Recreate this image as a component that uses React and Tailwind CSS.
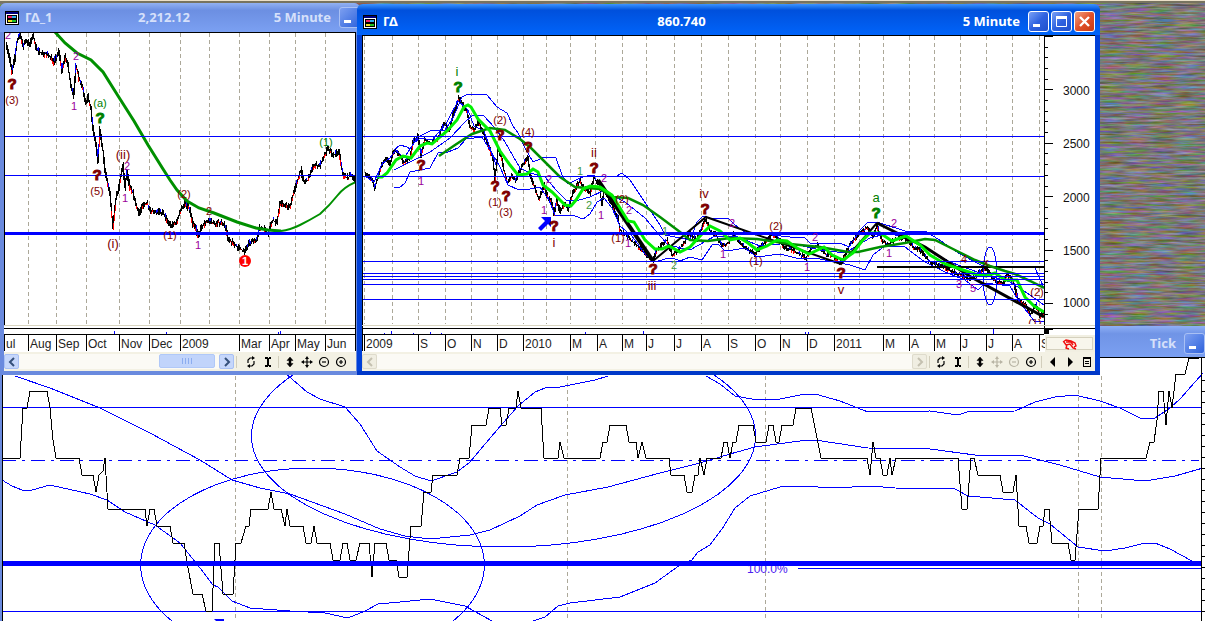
import React from "react";
import clsx from "clsx";

const BLUE = "#0000ff";
const MAROON = "#800000";
const PURPLE = "#990099";
const GREEN = "#008000";
const TEAL = "#3f9a3f";

const weeklyPrice = [
  [6, 42], [9, 55], [12, 72], [15, 58], [17, 42], [20, 33], [23, 47], [26, 40], [30, 45], [33, 35], [37, 50], [42, 53],
  [48, 55], [51, 57], [54, 62], [59, 52], [62, 70], [65, 57], [68, 65], [71, 85], [74, 95], [76, 65], [79, 78], [83, 88],
  [86, 104], [88, 97], [91, 110], [93, 128], [96, 145], [98, 161], [100, 130], [103, 150], [105, 170], [108, 185],
  [110, 195], [113, 229], [116, 198], [119, 188], [123, 165], [125, 188], [127, 172], [130, 188], [133, 192], [136, 205],
  [139, 213], [144, 205], [147, 203], [151, 210], [156, 211], [163, 213], [168, 222], [172, 226], [177, 222], [180, 212],
  [185, 203], [190, 210], [193, 225], [196, 228], [198, 236], [201, 229], [206, 222], [210, 220], [214, 224], [222, 222],
  [226, 227], [228, 240], [233, 243], [240, 249], [245, 252], [249, 243], [256, 240], [260, 228], [264, 228], [268, 233],
  [273, 220], [277, 224], [280, 203], [284, 205], [290, 207], [294, 192], [298, 180], [301, 170], [304, 182], [308, 180],
  [314, 165], [320, 165], [325, 155], [328, 149], [333, 155], [339, 152], [343, 175], [348, 178], [351, 175], [355, 178],
];

const weeklyAverage =
  "M55 32L65 43L77 53L91 60L103 72L120 99L134 121L148 145L163 169L170 180L177 190L187 201L199 208L214 213L237 222L256 228L268 230L281 231";
const weeklyAverageEnd = "M281 231Q290 230 300 225T320 214Q330 205 337 196T356 182";

const dailyPrice = [
  [365, 172], [372, 180], [375, 188], [377, 180], [382, 165], [386, 158], [390, 165], [394, 150], [400, 155], [404, 163],
  [410, 158], [413, 142], [418, 136], [421, 155], [425, 140], [431, 143], [438, 138], [444, 122], [449, 132], [453, 115],
  [459, 98], [463, 104], [467, 112], [470, 128], [474, 130], [478, 122], [483, 132], [488, 145], [493, 158], [495, 182],
  [498, 148], [501, 155], [504, 170], [507, 182], [512, 175], [516, 180], [520, 170], [528, 157], [530, 175], [535, 188],
  [539, 200], [544, 185], [548, 198], [551, 200], [554, 214], [557, 200], [560, 212], [565, 203], [568, 209], [573, 193],
  [580, 180], [583, 186], [590, 194], [594, 178], [599, 184], [602, 205], [604, 190], [610, 200], [618, 218], [620, 230],
  [626, 235], [633, 242], [640, 248], [653, 261], [657, 250], [662, 245], [667, 240], [672, 255], [676, 252], [683, 245],
  [690, 234], [697, 240], [703, 225], [706, 219], [710, 230], [716, 235], [722, 245], [728, 244], [733, 234], [741, 244],
  [750, 251], [755, 254], [762, 245], [772, 235], [778, 238], [784, 248], [792, 250], [800, 254], [806, 258], [812, 248],
  [818, 245], [826, 254], [833, 256], [840, 263], [845, 255], [850, 244], [858, 235], [863, 230], [868, 228], [873, 238],
  [877, 226], [882, 240], [888, 245], [894, 240], [902, 238], [908, 240], [914, 248], [920, 250], [930, 262], [940, 266],
  [950, 270], [960, 275], [970, 280], [980, 272], [986, 268], [994, 280], [1003, 283], [1007, 275], [1013, 280],
  [1018, 300], [1026, 305], [1030, 315], [1036, 305], [1040, 316], [1044, 314],
];

const fastAverage =
  "377,177 382,177 387,173 396,160 403,156 411,158 420,146 427,143 432,144 447,131 457,120 464,107 468,105 471,107 478,119 490,131 500,151 510,165 518,175 527,174 533,169 538,172 543,185 552,192 560,200 565,205 571,206 576,200 583,189 590,186 600,187 612,195 620,208 628,221 634,222 645,240 655,249 662,249 669,246 680,252 690,247 702,234 710,226 720,231 730,240 740,238 748,243 757,250 767,246 777,240 787,241 797,248 809,254 824,247 832,255 843,260 853,253 862,241 870,233 880,233 892,241 906,236 920,245 930,255 945,264 960,269 975,274 986,276 995,273 1005,280 1017,280 1025,297 1034,306 1044,312";
const slowAverage =
  "439,156 455,145 472,134 490,128 505,130 520,139 531,148 545,162 560,177 575,187 600,189 613,197 628,198 643,205 660,217 680,232 690,240 708,241 730,238 757,239 790,244 820,247 848,252 858,252 880,247 905,243 925,239 935,240 955,250 975,260 990,266 1005,271 1015,274 1030,281 1044,288";

const bands = [
  "394,150 400,145 407,147 410,149 418,137 430,131 445,130 453,118 462,97 468,94 487,95 497,107 507,113 513,126 518,133 525,148 533,162 545,157 556,158 562,175 568,184 580,178 590,175 600,177 617,176 622,173 630,180 642,198 652,213 660,225 665,235 690,240 697,222 703,216 710,218 728,218 735,225 745,232 790,237 805,238 810,243 840,243 849,247 860,230 867,223 877,222 905,231 925,231 938,239 960,254 985,267 1035,268 1044,288",
  "394,170 410,162 430,152 450,138 465,122 472,116 483,115 495,128 505,142 513,156 520,168 530,173 545,177 556,190 567,201 579,200 590,197 605,190 612,195 625,202 645,218 655,230 668,245 690,250 715,236 735,236 760,246 790,243 820,250 845,253 870,238 885,234 905,236 925,247 950,262 980,273 1010,282 1030,295 1044,305",
  "394,187 399,188 405,183 410,172 420,170 430,168 438,153 448,152 458,148 466,139 482,137 493,155 500,167 508,185 519,190 530,189 540,187 549,200 555,215 575,216 583,219 590,214 597,202 604,198 612,208 620,226 632,236 645,254 655,262 665,259 673,258 680,261 690,257 702,260 712,245 718,244 724,250 733,250 745,248 757,257 780,254 800,259 815,258 850,265 865,270 873,255 885,246 905,247 925,262 945,272 965,280 978,290 985,283 1010,286 1018,300 1035,322 1044,321",
  "365,176 374,182 382,164 390,158 396,150 404,158 414,143 420,138 432,140 446,124 458,101 468,110 474,126 484,131 496,165",
];

const tickPrice =
  "2,458 20,458 23,408 27,408 30,391 47,391 50,408 53,440 56,458 79,458 82,475 93,475 96,492 99,475 103,471 105,458 108,509 145,509 147,526 150,509 154,509 157,526 170,526 173,543 184,543 188,568 193,594 202,594 206,611 212,611 215,543 219,543 223,594 233,594 236,543 241,543 246,526 249,526 251,509 268,509 271,492 274,509 281,509 285,526 287,509 290,526 303,526 306,543 311,543 314,526 317,543 330,543 333,560 340,560 343,543 347,543 350,560 356,560 360,543 369,543 372,577 375,543 386,543 389,560 396,560 399,577 407,577 411,526 421,526 424,492 431,492 433,475 457,475 460,458 469,458 472,425 486,425 489,408 500,408 502,425 506,425 509,408 516,408 518,391 521,408 541,408 544,458 558,458 560,442 564,458 600,458 603,442 607,442 610,425 626,425 629,442 636,442 638,458 642,442 646,458 669,458 671,475 684,475 687,492 692,492 695,475 698,475 700,458 704,475 707,458 721,458 724,442 727,442 730,458 733,442 736,442 739,425 753,425 756,442 766,442 769,425 773,425 776,442 779,442 782,425 793,425 796,408 811,408 821,458 867,458 870,475 873,442 876,458 880,458 883,475 887,475 890,458 892,475 896,458 958,458 962,509 967,509 971,458 974,458 978,475 1000,475 1003,492 1013,492 1016,475 1019,526 1026,526 1029,543 1037,543 1040,526 1043,526 1045,509 1049,509 1052,543 1068,543 1071,560 1075,560 1079,509 1098,509 1101,458 1146,458 1150,442 1154,442 1157,420 1159,391 1163,391 1166,425 1169,391 1172,408 1176,374 1185,374 1189,358 1199,358";

const tickCurves = [
  "15,376 50,388 100,408 150,433 200,460 232,480 260,488 290,494 345,514 380,529 405,536 430,539 470,535 490,530 520,516 537,505 565,495 608,487 660,473 700,463 730,454 755,447 800,441 815,440 868,448 930,449 975,455 1020,455 1060,465 1100,477 1145,481 1175,476 1203,468",
  "2,480 12,486 22,490 32,490 50,485 90,494 107,500 125,512 155,525 180,543 200,568 213,585 218,587 232,601 250,608 290,611 325,613 348,618 365,611 378,604 400,602 430,599 465,606 492,621",
  "533,621 545,617 558,606 570,603 620,597 655,583 680,565 692,560 698,552 710,545 722,529 735,508 750,496 780,487 800,486 835,488 870,486 895,488 955,489 968,496 1015,500 1038,518 1050,524 1078,547 1105,551 1125,548 1145,543 1155,543 1170,549 1192,561",
  "285,373 307,392 320,399 345,407 360,424 377,451 400,467 415,476 431,481 457,472 470,462 480,450 497,430 518,406 535,392 545,388 560,387 595,380 608,376",
  "706,376 720,384 735,396 752,399 780,399 800,395 815,394 840,401 868,412 930,411 958,415 967,412 1015,411 1035,402 1055,397 1075,395 1100,401 1120,408 1140,418 1155,418 1170,408 1180,399 1203,373",
];

// x, baseline, text, colour, size
const weeklyLabels = [
  [8, 39, "2", PURPLE, 11],
  [12, 104, "(3)", MAROON, 11],
  [76, 60, "2", PURPLE, 11],
  [74, 110, "1", PURPLE, 11],
  [100, 107, "(a)", GREEN, 11],
  [97, 195, "(5)", MAROON, 11],
  [123, 159, "(ii)", MAROON, 13],
  [127, 170, "2", PURPLE, 11],
  [125, 202, "1", PURPLE, 11],
  [113, 248, "(i)", MAROON, 13],
  [184, 198, "(2)", MAROON, 11],
  [209, 215, "2", MAROON, 11],
  [170, 239, "(1)", MAROON, 11],
  [198, 249, "1", PURPLE, 11],
  [326, 146, "(1)", GREEN, 11],
];
const weeklyMarks = [
  [12, 89, MAROON],
  [100, 123, GREEN],
  [97, 180, MAROON],
];

const dailyLabels = [
  [457, 76, "i", GREEN, 13],
  [421, 185, "1", PURPLE, 11],
  [500, 124, "(2)", MAROON, 11],
  [528, 136, "(4)", MAROON, 11],
  [495, 206, "(1)", MAROON, 11],
  [506, 216, "(3)", MAROON, 11],
  [549, 183, "2", PURPLE, 11],
  [544, 214, "1", PURPLE, 11],
  [554, 247, "i", MAROON, 13],
  [580, 175, "1", TEAL, 11],
  [594, 157, "ii", MAROON, 13],
  [604, 182, "2", PURPLE, 11],
  [589, 209, "2", TEAL, 11],
  [601, 219, "1", PURPLE, 11],
  [622, 203, "(2)", MAROON, 11],
  [629, 214, "2", PURPLE, 11],
  [618, 242, "(1)", MAROON, 11],
  [628, 247, "1", PURPLE, 11],
  [652, 290, "iii", MAROON, 13],
  [665, 235, "1", TEAL, 11],
  [674, 269, "2", TEAL, 11],
  [704, 198, "iv", MAROON, 13],
  [723, 258, "1", PURPLE, 11],
  [732, 227, "2", PURPLE, 11],
  [756, 265, "(1)", MAROON, 11],
  [776, 230, "(2)", MAROON, 11],
  [807, 271, "1", PURPLE, 11],
  [815, 241, "2", PURPLE, 11],
  [841, 294, "v", MAROON, 13],
  [876, 202, "a", GREEN, 13],
  [894, 227, "2", PURPLE, 11],
  [889, 257, "1", PURPLE, 11],
  [959, 288, "3", PURPLE, 11],
  [964, 263, "4", MAROON, 11],
  [973, 292, "5", PURPLE, 11],
  [986, 266, "x", MAROON, 11],
  [1037, 296, "(2)", MAROON, 11],
  [1035, 327, "(1)", MAROON, 11],
];
const dailyMarks = [
  [458, 92, GREEN],
  [421, 170, MAROON],
  [500, 140, MAROON],
  [528, 152, MAROON],
  [495, 191, MAROON],
  [506, 201, MAROON],
  [554, 231, MAROON],
  [594, 173, MAROON],
  [653, 274, MAROON],
  [705, 214, MAROON],
  [841, 278, MAROON],
  [876, 218, GREEN],
];

const weeklyMonths = [
  [4, "ul"], [28, "Aug"], [56, "Sep"], [86, "Oct"], [119, "Nov"], [149, "Dec"], [180, "2009"], [239, "Mar"],
  [269, "Apr"], [295, "May"], [325, "Jun"],
];
const dailyMonths = [
  [364, "2009"], [418, "S"], [445, "O"], [471, "N"], [497, "D"], [523, "2010"], [570, "M"], [597, "A"], [622, "M"],
  [646, "J"], [674, "J"], [701, "A"], [728, "S"], [755, "O"], [780, "N"], [807, "D"], [834, "2011"], [883, "M"],
  [909, "A"], [934, "M"], [960, "J"], [986, "J"], [1012, "A"], [1039, "S"],
];
const dailyGrid = [
  364, 392, 418, 445, 471, 497, 523, 546, 570, 595, 622, 646, 674, 701, 728, 755, 780, 807, 834, 859, 883, 909, 934,
  960, 986, 1012, 1039,
];

// fills the space between two closes with a bar for every pixel
const makeBars = (points, spread) => {
  const bars = { black: "", red: "", blue: "" };
  let seed = 7;
  const random = () => {
    seed = (seed * 16807) % 2147483647;
    return seed / 2147483647;
  };
  let last = points[0][1];
  for (let i = 1; i < points.length; i++) {
    const [x0, y0] = points[i - 1];
    const [x1, y1] = points[i];
    for (let x = x0; x < x1; x++) {
      const y = y0 + ((y1 - y0) * (x + 1 - x0)) / (x1 - x0);
      const top = Math.round(Math.min(last, y) - random() * spread);
      const bottom = Math.round(Math.max(last, y) + random() * spread);
      const bar = `M${x + 0.5} ${top}V${bottom}`;
      bars.black += bar;
      const pick = random();
      const middle = Math.round((top + bottom) / 2);
      if (pick < 0.22) bars.red += `M${x + 0.5} ${middle}V${bottom}`;
      else if (pick > 0.82) bars.blue += `M${x + 0.5} ${top}V${middle}`;
      last = y;
    }
  }
  return bars;
};

const PriceBars = ({ points, spread }) => {
  const bars = makeBars(points, spread);
  return (
    <g fill="none" shapeRendering="crispEdges">
      <path d={bars.black} stroke="#000" />
      <path d={bars.red} stroke="#f00" />
      <path d={bars.blue} stroke={BLUE} />
    </g>
  );
};

const VerticalGrid = ({ lines, top, bottom }) => (
  <g stroke="#aca899" strokeDasharray="4 3" shapeRendering="crispEdges">
    {lines.map((x) => (
      <line key={x} x1={x + 0.5} x2={x + 0.5} y1={top} y2={bottom} />
    ))}
  </g>
);

const HorizontalLines = ({ lines, from, to }) => (
  <g stroke={BLUE} shapeRendering="crispEdges">
    {lines.map((y) => (
      <line key={y} x1={from} x2={to} y1={y + 0.5} y2={y + 0.5} />
    ))}
  </g>
);

const WaveLabels = ({ labels, marks }) => (
  <g textAnchor="middle">
    {labels.map(([x, y, text, color, size]) => (
      <text key={`${x}-${y}`} x={x} y={y} fill={color} fontSize={size}>
        {text}
      </text>
    ))}
    {marks.map(([x, y, color]) => (
      <text key={`${x}-${y}`} x={x} y={y} fill={color} stroke={color} fontSize="15" fontWeight="bold">
        ?
      </text>
    ))}
  </g>
);

const MonthAxis = ({ months, from, to }) => (
  <g>
    <path d={`M${from} 328.5H${to}M${from} 334.5H${to}`} stroke="#000" shapeRendering="crispEdges" />
    {months.map(([x, text]) => (
      <g key={x}>
        <line x1={x + 0.5} x2={x + 0.5} y1="334" y2="351" stroke="#000" shapeRendering="crispEdges" />
        <text x={x + 2} y="348" fontSize="12" fill="#222">
          {text}
        </text>
      </g>
    ))}
  </g>
);

const WeeklyChart = () => (
  <svg viewBox="4 32 352 320" className="block h-[320px] w-full bg-white">
    <VerticalGrid lines={[28, 56, 86, 119, 149, 180, 209, 239, 269, 295, 325]} top={33} bottom={325} />
    <PriceBars points={weeklyPrice} spread={4} />
    <path d={weeklyAverage} fill="none" stroke="#009000" strokeWidth="3" />
    <path d={weeklyAverageEnd} fill="none" stroke="#009000" strokeWidth="2" />
    <HorizontalLines lines={[136, 175]} from={4} to={355} />
    <rect x="4" y="232" width="351" height="3" fill={BLUE} />
    <WaveLabels labels={weeklyLabels} marks={weeklyMarks} />
    <circle cx="245" cy="261" r="6" fill="#f00" />
    <text x="245" y="265" textAnchor="middle" fontSize="11" fontWeight="bold" fill="#fff">
      1
    </text>
    <path d="M4 325.5H356" stroke="#d8d4c0" />
    <path d="M4 32.5H356M4.5 32V325M355.5 32V351" stroke="#000" shapeRendering="crispEdges" />
    <path d="M114.5 331V334M166.5 332V334M278.5 332V334M280.5 331V334" stroke={BLUE} shapeRendering="crispEdges" />
    <rect x="5" y="335" width="350" height="16" fill="#fff" />
    <MonthAxis months={weeklyMonths} from={4} to={356} />
  </svg>
);

const priceTicks = Array.from({ length: 27 }, (_, i) => Math.round(36 + i * 10.68));

const DailyChart = () => (
  <svg viewBox="362 35 733 317" className="block h-[317px] w-full bg-white">
    <defs>
      <clipPath id="daily-area">
        <rect x="362" y="36" width="682" height="288" />
      </clipPath>
    </defs>
    <g clipPath="url(#daily-area)">
      <VerticalGrid lines={dailyGrid} top={36} bottom={324} />
      <PriceBars points={dailyPrice} spread={3} />
      <g fill="none" stroke={BLUE} shapeRendering="crispEdges">
        {bands.map((points) => (
          <polyline key={points} points={points} />
        ))}
        <ellipse cx="990" cy="276" rx="7" ry="29" />
      </g>
      <g fill="none" stroke="#000">
        <path d="M598 180L653 261" strokeWidth="4" />
        <path d="M653 261L706 217L841 264L877 223" strokeWidth="2" />
        <path d="M877 223L925 247L971 277L1044 317" strokeWidth="3" />
        <path d="M877 267H1044" strokeWidth="2" />
      </g>
      <polyline points={slowAverage} fill="none" stroke="#009000" strokeWidth="2.5" />
      <polyline points={fastAverage} fill="none" stroke="#00f000" strokeWidth="3" />
      <HorizontalLines lines={[136, 176, 261, 273, 276, 279, 284, 299]} from={362} to={1044} />
      <rect x="362" y="232" width="682" height="3" fill={BLUE} />
      <path d="M541 217H551V227L548 224L541 231L538 228L545 221Z" fill={BLUE} />
      <WaveLabels labels={dailyLabels} marks={dailyMarks} />
    </g>
    <g stroke="#000" shapeRendering="crispEdges">
      <path d="M362 35.5H1095M362.5 35V351M1044.5 35V334" />
      {priceTicks.map((y, i) => (
        <line key={y} x1="1044" x2={i % 5 === 0 ? 1053 : 1048} y1={y + 0.5} y2={y + 0.5} />
      ))}
    </g>
    <g fontSize="12" fill="#111">
      <text x="1063" y="95">3000</text>
      <text x="1063" y="148">2500</text>
      <text x="1063" y="202">2000</text>
      <text x="1063" y="255">1500</text>
      <text x="1063" y="307">1000</text>
    </g>
    <path d="M362 325.5H1095" stroke="#d8d4c0" />
    <path
      d="M384.5 333V334M391.5 331V334M413.5 333V334M430.5 332V334M441.5 333V334M585.5 332V334M643.5 331V334M805.5 332V334M808.5 332V334M930.5 331V334M993.5 329V334"
      stroke={BLUE}
      shapeRendering="crispEdges"
    />
    <MonthAxis months={dailyMonths} from={362} to={1044} />
    <path d="M1044 328.5H1095" stroke="#000" shapeRendering="crispEdges" />
    <rect x="1045" y="335" width="50" height="17" fill="#f1efe2" />
    <rect x="1046.5" y="337.5" width="46" height="12" fill="#f8f6ec" stroke="#d5d1be" />
    <path d="M1044 329H1048V333H1044ZM1048 329.5H1053" fill="#000" stroke="#000" shapeRendering="crispEdges" />
    <path
      d="M1063 342L1066 340L1071 341L1075 343L1076 346L1074 347M1064 342L1066 345L1070 344L1073 348L1076 349M1067 345L1066 348L1069 349M1066 342H1071L1073 345"
      fill="none"
      stroke="#f01010"
      strokeWidth="1.4"
    />
  </svg>
);

const TickChart = () => (
  <svg
    viewBox="2 357 1203 264"
    preserveAspectRatio="xMinYMin"
    className="block h-[264px] w-full bg-white"
    fill="none"
  >
    <VerticalGrid lines={[235, 567, 765, 1078, 1101]} top={376} bottom={621} />
    <g stroke={BLUE} shapeRendering="crispEdges">
      {tickCurves.map((points) => (
        <polyline key={points} points={points} />
      ))}
      <ellipse cx="503.5" cy="436" rx="252" ry="111" />
      <ellipse cx="312.5" cy="565" rx="172" ry="97" />
      <path d="M2 460.5H1199" strokeDasharray="14 6 3 6" />
      <path d="M2 407.5H1201M2 611.5H1201M798 568.5H1201" />
    </g>
    <polyline points={tickPrice} stroke="#000" shapeRendering="crispEdges" />
    <text x="747" y="573" fontSize="12" fill="#4a20f0">
      100.0%
    </text>
    <rect x="2" y="561" width="1199" height="5" fill={BLUE} />
    <path d="M214 619H224V621H216Z" fill={BLUE} />
    <g stroke="#000" shapeRendering="crispEdges">
      <path d="M2 357.5H1205M2.5 357V621M1201.5 357V621" />
      {Array.from({ length: 22 }, (_, i) => (
        <line key={i} x1="1201" x2="1205" y1={380.5 + i * 11} y2={380.5 + i * 11} />
      ))}
    </g>
  </svg>
);

const AppIcon = () => (
  <svg viewBox="0 0 14 14" className="size-[14px] shrink-0" shapeRendering="crispEdges" aria-hidden="true">
    <rect width="14" height="14" fill="#000" />
    <rect x="1" y="1" width="12" height="2" fill="#000080" />
    <rect x="1" y="3" width="12" height="10" fill="#fff" />
    <rect x="2" y="4" width="10" height="8" fill="#000" />
    <rect x="3" y="5" width="4" height="2" fill="#f0206a" />
    <rect x="7" y="5" width="4" height="2" fill="#30b0f0" />
    <rect x="3" y="9" width="4" height="2" fill="#f0e020" />
    <rect x="7" y="9" width="4" height="2" fill="#20c020" />
  </svg>
);

const CaptionButton = ({ label, tone, children }) => (
  <button
    aria-label={label}
    className={clsx(
      "flex size-[21px] shrink-0 items-center justify-center rounded-[3px] border",
      tone === "active" && "border-white bg-linear-to-br from-[#7ba0f5] via-[#2f62e0] to-[#1f50cc]",
      tone === "close" && "border-white bg-linear-to-br from-[#f0a080] via-[#e0502a] to-[#c83a10]",
      tone === "idle" && "border-[#a9c0f4] bg-linear-to-br from-[#7d9ff0] to-[#2f62dc]"
    )}
  >
    <svg viewBox="0 0 19 19" className="size-full" fill="none" stroke="#fff" aria-hidden="true">
      {children}
    </svg>
  </button>
);

const MinimizeGlyph = () => <path d="M4 13.5H11" strokeWidth="3" />;

const TitleBar = ({ name, value, interval, active, children }) => (
  <header
    className={clsx(
      "flex items-center gap-2 rounded-t-md font-['Noto_Sans',sans-serif] text-[13px] font-bold",
      active
        ? "h-[31px] bg-linear-to-b from-[#3b94ff] via-[#0050dc] via-20% to-[#0064fa] pt-1 pr-[5px] pl-[6px] text-white"
        : "h-[29px] bg-linear-to-b from-[#92b1f2] via-[#6c8fe2] via-25% to-[#7ba0f2] pl-[5px] text-[#d6e0fa]"
    )}
  >
    <div className="flex flex-1 items-center gap-[6px]">
      {name && <AppIcon />}
      <h2>{name}</h2>
    </div>
    <span className={clsx(active ? "pr-5" : "pr-2")}>{value}</span>
    <span className="flex-1 text-right">{interval}</span>
    <div className="flex gap-[2px]">{children}</div>
  </header>
);

const icons = {
  refresh: (
    <g>
      <path d="M3 7V4L5 2H8M9 5V8L7 10H4" />
      <path d="M7 0L10 2L7 4ZM5 8L2 10L5 12Z" fill="currentColor" stroke="none" />
    </g>
  ),
  cursor: (
    <g shapeRendering="crispEdges">
      <path d="M3 2H5.5M6.5 2H9M3 10H5.5M6.5 10H9M6 2V10" />
    </g>
  ),
  vertical: <path d="M6 1L9 4.5H7V7.5H9L6 11L3 7.5H5V4.5H3Z" fill="currentColor" strokeWidth="0.5" />,
  move: (
    <g>
      <path d="M6 2V10M2 6H10" />
      <path d="M6 0L8 3H4ZM6 12L4 9H8ZM0 6L3 4V8ZM12 6L9 8V4Z" fill="currentColor" stroke="none" />
    </g>
  ),
  zoomOut: (
    <g>
      <circle cx="6" cy="6" r="4.5" />
      <path d="M4 6H8" />
    </g>
  ),
  zoomIn: (
    <g>
      <circle cx="6" cy="6" r="4.5" />
      <path d="M4 6H8M6 4V8" />
    </g>
  ),
  previous: <path d="M8 1V11L3 6Z" fill="currentColor" stroke="none" />,
  next: <path d="M4 1V11L9 6Z" fill="currentColor" stroke="none" />,
  list: (
    <g strokeWidth="1" shapeRendering="crispEdges">
      <path d="M2.5 2.5H9.5V10.5H2.5ZM4 5.5H8M4 7.5H8" />
      <path d="M2 1.5H10" />
    </g>
  ),
};

const Tool = ({ icon, label, disabled }) => (
  <button
    aria-label={label}
    disabled={disabled}
    className="flex h-[18px] w-[17px] shrink-0 items-center justify-center text-black disabled:text-[#b8b4a4]"
  >
    <svg viewBox="0 0 12 12" className="size-3" fill="none" stroke="currentColor" strokeWidth="1.2">
      {icons[icon]}
    </svg>
  </button>
);

const Divider = () => <span className="mx-[2px] h-3 w-px shrink-0 bg-[#d2cebc]" />;

const ScrollButton = ({ label, back, disabled }) => (
  <button
    aria-label={label}
    disabled={disabled}
    className="flex h-[15px] w-[15px] shrink-0 items-center justify-center rounded-[2px] border border-[#a8c0f4] bg-[#c6d7fb] text-[#35507a] disabled:border-[#dedbcc] disabled:bg-[#f0eee2] disabled:text-[#c4c0b0]"
  >
    <svg viewBox="0 0 10 10" className="size-[10px]" fill="none" stroke="currentColor" strokeWidth="2">
      <path d={back ? "M7 1L3 5L7 9" : "M3 1L7 5L3 9"} />
    </svg>
  </button>
);

const ScrollRow = ({ disabled, children }) => (
  <footer className="flex h-[19px] items-center bg-[#f3f1e4]">
    <ScrollButton label="Scroll left" back disabled={disabled} />
    <div className="flex h-[15px] flex-1 justify-end bg-[#fbfaf5] pr-1">
      {!disabled && (
        <div className="flex h-[14px] w-14 items-center justify-center gap-[2px] rounded-[2px] border border-[#b0c8f8] bg-[#c1d4fb]">
          <span className="h-[6px] w-px bg-[#8cadf0]" />
          <span className="h-[6px] w-px bg-[#8cadf0]" />
          <span className="h-[6px] w-px bg-[#8cadf0]" />
          <span className="h-[6px] w-px bg-[#8cadf0]" />
        </div>
      )}
    </div>
    <ScrollButton label="Scroll right" disabled={disabled} />
    <Divider />
    {children}
  </footer>
);

const DesktopTexture = () => (
  <svg className="absolute inset-0 h-full w-full" aria-hidden="true">
    <filter id="weave" x="0" y="0" width="100%" height="100%" colorInterpolationFilters="sRGB">
      <feTurbulence type="fractalNoise" baseFrequency="0.04 0.45" numOctaves="3" seed="4" />
      <feColorMatrix values="0.55 0 0 0 0.2  0 0.5 0 0 0.22  0 0 0.9 0 0.01  0 0 0 0 1" />
    </filter>
    <rect width="100%" height="100%" filter="url(#weave)" />
  </svg>
);

const App = () => {
  return (
    <main className="relative h-screen min-h-[621px] w-full overflow-hidden bg-[#7c7870] font-['Liberation_Sans',Arial,sans-serif]">
      <DesktopTexture />
      <div className="relative h-[3px] border-b-2 border-[#77735f] bg-[#ece0c8]" />

      <section className="absolute inset-x-0 top-[326px] bg-[#7b9ff0]">
        <header className="flex h-[31px] items-center justify-end gap-2 bg-linear-to-b from-[#8fb0f6] via-[#7094e6] via-25% to-[#7ba0f2] pt-1 font-['Noto_Sans',sans-serif] text-[13px] font-bold text-[#d6e0fa]">
          <h2>Tick</h2>
          <CaptionButton label="Minimize Tick" tone="idle">
            <MinimizeGlyph />
          </CaptionButton>
        </header>
        <div className="border-l-2 border-[#6a8ade]">
          <TickChart />
        </div>
      </section>

      <section className="absolute top-[3px] left-0 w-[360px] rounded-t-md border-b-4 border-[#6a8ade] bg-[#6a8ade]">
        <TitleBar name="ΓΔ_1" value="2,212.12" interval="5 Minute">
          <CaptionButton label="Minimize ΓΔ_1" tone="idle">
            <MinimizeGlyph />
          </CaptionButton>
        </TitleBar>
        <div className="px-1">
          <WeeklyChart />
          <ScrollRow>
            <div className="flex w-[117px] items-center pl-[3px]">
              <Tool icon="refresh" label="Refresh" />
              <Tool icon="cursor" label="Cursor" />
              <Divider />
              <Tool icon="vertical" label="Stretch" />
              <Tool icon="move" label="Move" />
              <Tool icon="zoomOut" label="Zoom out" />
              <Tool icon="zoomIn" label="Zoom in" />
            </div>
          </ScrollRow>
        </div>
      </section>

      <section className="absolute top-1 left-[357px] w-[743px] rounded-t-lg border-b-4 border-[#0038c8] bg-[#0040d8]">
        <TitleBar name="ΓΔ" value="860.740" interval="5 Minute" active>
          <CaptionButton label="Minimize ΓΔ" tone="active">
            <MinimizeGlyph />
          </CaptionButton>
          <CaptionButton label="Maximize ΓΔ" tone="active">
            <path d="M4.5 5V14.5H14.5V5" />
            <path d="M4 5.5H15" strokeWidth="3" />
          </CaptionButton>
          <CaptionButton label="Close ΓΔ" tone="close">
            <path d="M5 5L14 14M14 5L5 14" strokeWidth="2.4" />
          </CaptionButton>
        </TitleBar>
        <div className="px-[5px]">
          <DailyChart />
          <ScrollRow disabled>
            <Tool icon="refresh" label="Refresh" />
            <Tool icon="cursor" label="Cursor" />
            <Divider />
            <Tool icon="vertical" label="Stretch" />
            <Tool icon="move" label="Move" disabled />
            <Tool icon="zoomOut" label="Zoom out" disabled />
            <Tool icon="zoomIn" label="Zoom in" />
            <Divider />
            <Tool icon="previous" label="Previous" />
            <Tool icon="next" label="Next" />
            <Tool icon="list" label="List" />
          </ScrollRow>
        </div>
      </section>
    </main>
  );
};

export default App;
